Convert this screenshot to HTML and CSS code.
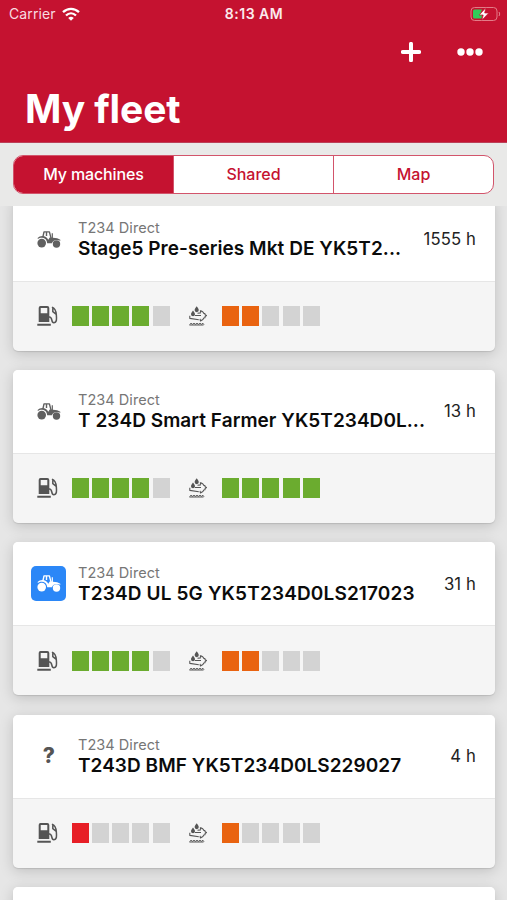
FILE: index.html
```
<!DOCTYPE html>
<html lang="en">
<head>
<meta charset="utf-8">
<title>My fleet</title>
<link rel="stylesheet" href="styles.css">
</head>
<body>
<svg class="defs" aria-hidden="true">
  <symbol id="tractor" viewBox="0 0 24 17">
    <path fill="none" stroke="currentColor" stroke-width="1.400" stroke-linejoin="round" d="M5.800 6.300 7 .9h5.400l1.700 6.500M9.500 1v4"/>
    <path fill="currentColor" d="M.600 7C1.800 5.700 3.500 5 5.300 5c2.800 0 4.900 1.500 6 3.700l1.400-2.200h2V2.300h1.200v4.400c3.200.1 5.700.8 7.400 2.100l.1 1c-4-1.600-7.100-.6-8.500 2.400h-4.700C9.900 9.100 8.200 6.700 4.900 6.700c-1.700 0-2.900.5-4 1.300z"/>
    <circle cx="4.700" cy="12.100" r="4.300" fill="currentColor"/><circle cx="19.500" cy="13" r="3.700" fill="currentColor"/>
  </symbol>
  <symbol id="fuel" viewBox="0 0 21 20">
    <path fill="currentColor" fill-rule="evenodd" d="M3.500 0h6.800q2 0 2 2v14H1.700V2q0-2 1.800-2zM3.700 2v5.200h6.600V2zM.300 17.800h13.500v2H.300z"/>
    <path fill="none" stroke="currentColor" stroke-width="1.500" d="M12 11c4-.5 1.700 5.700 4.700 5.700 3.500 0 2.900-4.500 2.600-8.200-.3-4-1.300-6.300-4.400-7.400M15.800 2.300v3.300l3.200 2.600"/>
  </symbol>
  <symbol id="fluid" viewBox="0 0 18 20">
    <path fill="currentColor" d="M7.700.2c1.400 2 2.100 3 2.100 3.900a2.100 2.100 0 0 1-4.200 0c0-.9.700-1.900 2.100-3.900zM4 4.600c1.400 1.900 2 2.900 2 3.700a2 2 0 0 1-4 0c0-.8.700-1.800 2-3.700z"/>
    <path fill="none" stroke="currentColor" stroke-width="1.100" stroke-linejoin="round" d="M.800 9.800v2.600l9 1.400M6 9.500h6M8.500 7.200l3.300-.3M11.300 4.400l.4 2.300M11.300 4.400l2.400 1.300 1.200 1.700 1 .1.200 1.200 1.400.8-1.400 1-.2 1.300-1.100.2-.9 1.500-2.500 1.400-.3-2"/>
    <path fill="none" stroke="currentColor" stroke-width="1" d="m.5 18.700 1.500-1.400 1.500 1 1.500-1 1.500 1 1.500-1 1.500 1 1.500-1 1.500 1 1.500-1 1 1.400M.500 19h14"/>
  </symbol>
</svg>
<div class="screen">
  <header class="header">
    <div class="status">
      <div class="carrier">Carrier
        <svg class="wifi" viewBox="0 0 18 14"><g fill="none" stroke="#fff" stroke-width="2.300"><path d="M1 5.200c4.700-4.500 11.300-4.500 16 0"/><path d="M4 8.500c3-2.900 7-2.900 10 0"/></g><path fill="#fff" d="M6.200 11q2.800-2.300 5.600 0L9 13.800z"/></svg>
      </div>
      <div class="time">8:13 AM</div>
      <svg class="battery" viewBox="0 0 31 16"><rect x="1" y="1.500" width="26" height="13" rx="3.500" fill="none" stroke="#e37c88"/><path d="M29 6q1.500 2 0 4" fill="#e37c88" stroke="#e37c88"/><path fill="#32cd59" d="M4.500 3.500H12l-2 5h2l-.5 4h-7q-1.500 0-1.500-1.500V5q0-1.500 1.500-1.500z"/><path fill="#fff" stroke="#c51230" stroke-width=".7" d="M15.800 1.800 9.200 9h4l-1.300 5.200L18.700 7h-4z"/></svg>
    </div>
    <div class="actions">
      <svg class="plus" viewBox="0 0 20 20"><path d="M10 1.800v16.400M1.800 10h16.400" stroke="#fff" stroke-width="4" stroke-linecap="round"/></svg>
      <svg class="more" viewBox="0 0 26 8"><g fill="#fff"><circle cx="4" cy="4" r="3.700"/><circle cx="13" cy="4" r="3.700"/><circle cx="22" cy="4" r="3.700"/></g></svg>
    </div>
    <h1>My fleet</h1>
  </header>
  <nav class="tabs">
    <div class="segments"><span class="tab active">My machines</span><span class="tab">Shared</span><span class="tab">Map</span></div>
  </nav>
  <main class="list">
    <article class="card">
      <div class="top"><div class="kind"><svg class="tractor"><use href="#tractor"/></svg></div><div class="info"><p>T234 Direct</p><h2>Stage5 Pre-series Mkt DE YK5T2...</h2></div><div class="hours">1555 h</div></div>
      <div class="levels"><svg class="fuel"><use href="#fuel"/></svg><div class="bar"><i class="green"></i><i class="green"></i><i class="green"></i><i class="green"></i><i></i></div><svg class="fluid"><use href="#fluid"/></svg><div class="bar"><i class="orange"></i><i class="orange"></i><i></i><i></i><i></i></div></div>
    </article>
    <article class="card">
      <div class="top"><div class="kind"><svg class="tractor"><use href="#tractor"/></svg></div><div class="info"><p>T234 Direct</p><h2>T 234D Smart Farmer YK5T234D0L...</h2></div><div class="hours">13 h</div></div>
      <div class="levels"><svg class="fuel"><use href="#fuel"/></svg><div class="bar"><i class="green"></i><i class="green"></i><i class="green"></i><i class="green"></i><i></i></div><svg class="fluid"><use href="#fluid"/></svg><div class="bar"><i class="green"></i><i class="green"></i><i class="green"></i><i class="green"></i><i class="green"></i></div></div>
    </article>
    <article class="card">
      <div class="top"><div class="kind selected"><svg class="tractor"><use href="#tractor"/></svg></div><div class="info"><p>T234 Direct</p><h2 class="loose">T234D UL 5G YK5T234D0LS217023</h2></div><div class="hours">31 h</div></div>
      <div class="levels"><svg class="fuel"><use href="#fuel"/></svg><div class="bar"><i class="green"></i><i class="green"></i><i class="green"></i><i class="green"></i><i></i></div><svg class="fluid"><use href="#fluid"/></svg><div class="bar"><i class="orange"></i><i class="orange"></i><i></i><i></i><i></i></div></div>
    </article>
    <article class="card">
      <div class="top"><div class="kind unknown">?</div><div class="info"><p>T234 Direct</p><h2>T243D BMF YK5T234D0LS229027</h2></div><div class="hours">4 h</div></div>
      <div class="levels"><svg class="fuel"><use href="#fuel"/></svg><div class="bar"><i class="red"></i><i></i><i></i><i></i><i></i></div><svg class="fluid"><use href="#fluid"/></svg><div class="bar"><i class="orange"></i><i></i><i></i><i></i><i></i></div></div>
    </article>
    <article class="card"><div class="top"></div><div class="levels"></div></article>
  </main>
</div>
</body>
</html>
```
FILE: styles.css
```
* { box-sizing: border-box; }
body { margin: 0; font-family: Inter, "Liberation Sans", sans-serif; background: #e8e8e8; }
h1, h2, p { margin: 0; white-space: nowrap; }
svg { display: block; flex: none; }
.defs { display: none; }
.screen { height: 900px; display: flex; flex-direction: column; overflow: hidden; }
.header { height: 143px; flex: none; background: #c51230; color: #fff; border-bottom: 1px solid #bb4058; }
.status { height: 27px; display: grid; grid-template-columns: 1fr auto 1fr; align-items: center; padding: 0 6px 0 9px; }
.carrier { display: flex; align-items: center; gap: 6px; font-size: 14px; letter-spacing: .1px; color: #f8dce1; }
.wifi { width: 18px; height: 14px; }
.time { font-size: 14px; font-weight: 600; letter-spacing: .5px; color: #fbe9ec; margin-right: 2px; }
.battery { width: 31px; height: 16px; justify-self: end; }
.actions { height: 48px; display: flex; justify-content: flex-end; align-items: center; gap: 36px; padding: 1px 24px 0 0; }
.plus { width: 20px; height: 20px; }
.more { width: 26px; height: 8px; }
h1 { padding-left: 25px; font-size: 39px; line-height: 68px; font-weight: 700; letter-spacing: -.1px; }
.tabs { height: 63px; flex: none; padding: 11.500px 13px 0; background: #e9e9e8; }
.segments { display: flex; height: 39.500px; border: 1px solid #d2546b; border-radius: 10px; overflow: hidden; background: #fff; }
.tab { flex: 1; display: flex; align-items: center; justify-content: center; font-size: 16px; font-weight: 450; letter-spacing: 0; color: #c51230; padding-bottom: 1px; }
.tab + .tab { border-left: 1px solid #d2546b; }
.tab.active { background: #c51230; color: #fff; font-weight: 500; letter-spacing: -.15px; }
.list { flex: 1; min-height: 0; overflow: hidden; background: #e6e6e6; padding: 0 12.500px 0 13px; }
.card { height: 153px; margin-bottom: 19.200px; border-radius: 5px; background: #f5f5f5; box-shadow: 0 1px 1px rgba(0,0,0,.1), 0 3px 14px rgba(0,0,0,.17); }
.card:first-child { margin-top: -8px; }
.top { height: 84px; display: flex; align-items: center; padding: 0 18.500px .5px 18.300px; background: #fff; border-bottom: 1.500px solid #e6e6e6; border-radius: 5px 5px 0 0; }
.kind { width: 35px; height: 35px; border-radius: 5px; display: flex; align-items: center; justify-content: center; flex: none; color: #606060; }
.selected { background: #2b87f7; color: #fff; }
.unknown { font-size: 21px; font-weight: 800; color: #555; }
.tractor { width: 24px; height: 17px; }
.info { margin-left: 11.700px; width: 0; flex: 1; }
.info p { font-size: 14.500px; line-height: 19px; letter-spacing: .05px; color: #767676; }
.info h2 { font-size: 19px; line-height: 23px; font-weight: 600; letter-spacing: .05px; color: #0b0b0b; }
.info .loose { letter-spacing: .15px; }
.hours { font-size: 16.700px; letter-spacing: .1px; color: #222; white-space: nowrap; }
.levels { height: 69px; display: flex; align-items: center; padding: 0 24.300px .5px; color: #555; }
.fuel { width: 21px; height: 20px; margin-right: 13.300px; }
.bar { display: flex; gap: 3.300px; }
.bar i { width: 17px; height: 20px; background: #d3d3d3; }
.fluid { width: 18px; height: 20px; margin: 0 15px 0 18.900px; }
.bar .green { background: #6bac2f; }
.bar .orange { background: #e96310; }
.bar .red { background: #e71e26; }
```
